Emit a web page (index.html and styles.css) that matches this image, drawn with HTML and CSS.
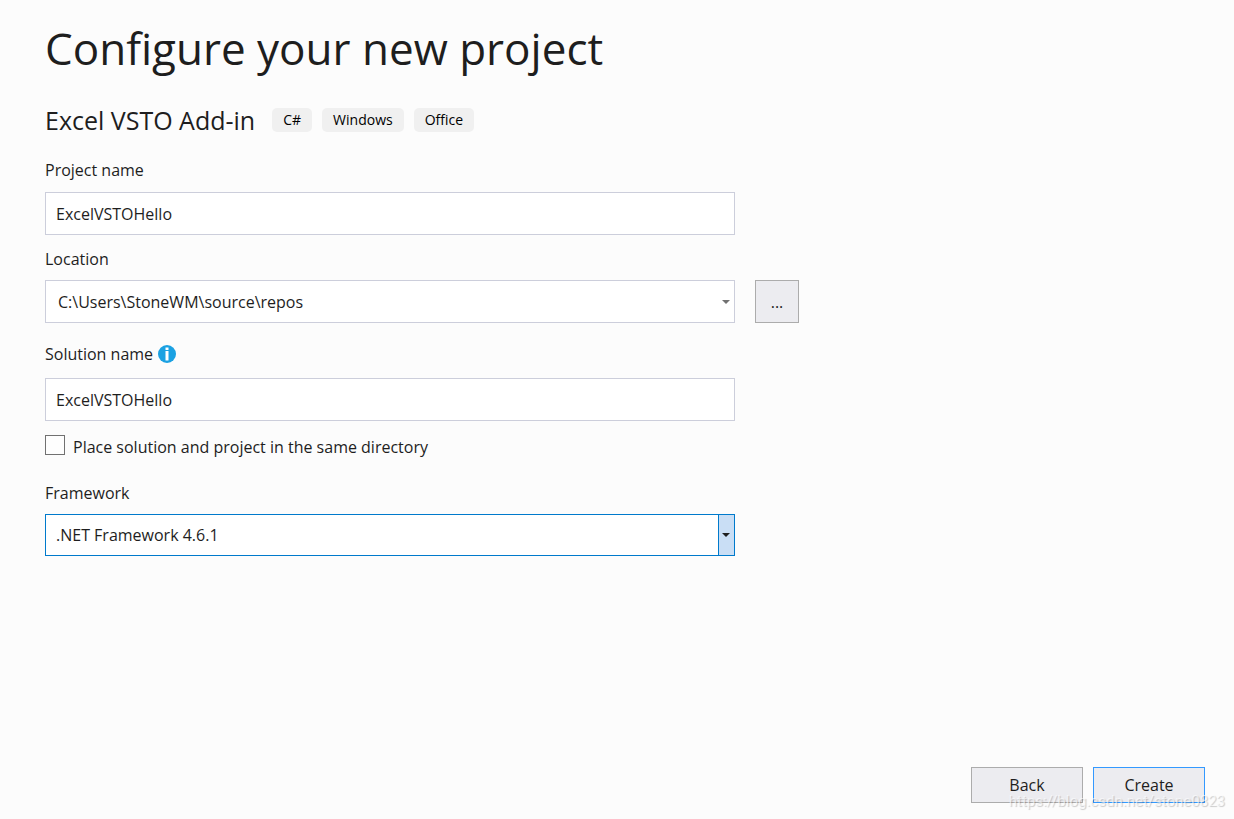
FILE: index.html
```html
<!DOCTYPE html>
<html lang="en">
<head>
  <meta charset="UTF-8">
  <meta name="viewport" content="width=device-width, initial-scale=1.0">
  <title>Configure your new project</title>
  <link rel="stylesheet" href="styles.css">
</head>
<body>
  <header>
    <h1>Configure your new project</h1>
    <div class="template">
      <h2>Excel VSTO Add-in</h2>
      <ul class="tags">
        <li>C#</li>
        <li>Windows</li>
        <li>Office</li>
      </ul>
    </div>
  </header>

  <form class="page-form">
    <main>
      <div class="field">
        <label for="projectName">Project name</label>
        <input class="box" type="text" id="projectName" value="ExcelVSTOHello">
      </div>

      <div class="field location">
        <label for="location">Location</label>
        <div class="combo">
          <select class="box" id="location">
            <option>C:\Users\StoneWM\source\repos</option>
          </select>
          <span class="arrow"><svg width="8" height="4" viewBox="0 0 8 4"><path d="M0 0h8L4 4z" fill="currentColor"/></svg></span>
        </div>
        <button type="button" class="btn browse" aria-label="Browse">...</button>
      </div>

      <div class="field solution">
        <div class="label-row">
          <label for="solutionName">Solution name</label>
          <svg class="info" width="18" height="18" viewBox="0 0 18 18">
            <circle cx="9" cy="9" r="9" fill="#1ba1e2"/>
            <path d="M7.500 2.500h3v2.500h-3zM7.500 6h3v9.500h-3z" fill="#fff"/>
          </svg>
        </div>
        <input class="box" type="text" id="solutionName" value="ExcelVSTOHello">
      </div>

      <div class="check">
        <input type="checkbox" id="sameDir">
        <label for="sameDir">Place solution and project in the same directory</label>
      </div>

      <div class="field framework">
        <label for="framework">Framework</label>
        <div class="combo active">
          <select class="box" id="framework">
            <option>.NET Framework 4.6.1</option>
          </select>
          <span class="arrow"><svg width="8" height="4" viewBox="0 0 8 4"><path d="M0 0h8L4 4z" fill="currentColor"/></svg></span>
        </div>
      </div>
    </main>

    <footer>
      <button type="button" class="btn">Back</button>
      <button type="submit" class="btn primary">Create</button>
    </footer>
  </form>

  <div class="watermark">https://blog.csdn.net/stone0823</div>
</body>
</html>
```

FILE: styles.css
```css
:root {
  --bg: #fcfcfc;
  --text: #1e1e1e;
  --border: #cccedb;
  --blue: #007acc;
  --button: #ececf0;
}

* {
  box-sizing: border-box;
}

body {
  margin: 0;
  min-height: 100vh;
  position: relative;
  display: flex;
  flex-direction: column;
  padding: 16px 29px 16px 45px;
  background: var(--bg);
  color: var(--text);
  font-family: "Open Sans", "Noto Sans", sans-serif;
  font-size: 16px;
  line-height: 24px;
}

h1, h2, ul {
  margin: 0;
  padding: 0;
  font-weight: 400;
}

h1 {
  font-size: 44px;
  line-height: 64px;
}

.template {
  display: flex;
  flex-wrap: wrap;
  align-items: center;
  gap: 17px;
  margin-top: 24px;
}

h2 {
  font-size: 25px;
  line-height: 32px;
}

.tags {
  display: flex;
  gap: 10px;
  list-style: none;
}

.tags li {
  padding: 0 11px;
  border-radius: 5px;
  background: #f0f0f0;
  color: #000;
  font-size: 14px;
}

.page-form {
  flex: 1;
  display: flex;
  flex-direction: column;
}

.field {
  display: grid;
  grid-template-columns: minmax(0, 690px) 44px;
  column-gap: 20px;
  row-gap: 10px;
  margin-top: 22px;
}

.field > label,
.label-row {
  grid-column: 1 / -1;
}

.location {
  margin-top: 12px;
  row-gap: 9px;
}

.solution {
  margin-top: 19px;
  row-gap: 12px;
}

.framework {
  row-gap: 9px;
}

.label-row {
  display: flex;
  align-items: center;
  gap: 5px;
}

.box {
  display: block;
  width: 100%;
  height: 43px;
  padding: 0 10px;
  border: 1px solid var(--border);
  border-radius: 0;
  background: #fff;
  color: var(--text);
  font: inherit;
  appearance: none;
}

.combo {
  position: relative;
}

.combo .box {
  padding: 0 24px 0 12px;
}

.arrow {
  position: absolute;
  top: 0;
  right: 0;
  bottom: 0;
  width: 17px;
  display: flex;
  align-items: center;
  justify-content: center;
  padding-right: 1px;
  color: #717171;
  pointer-events: none;
}

.active .box {
  height: 42px;
  padding-left: 10px;
  border-color: var(--blue);
}

.active .arrow {
  border: 1px solid var(--blue);
  background: #c9def5;
  color: #1e1e1e;
}

.check {
  display: flex;
  gap: 8px;
  margin-top: 14px;
}

.check input {
  width: 20px;
  height: 20px;
  margin: 0;
  border: 1px solid #717171;
  background: #fefefe;
  appearance: none;
}

.check input:checked {
  background: var(--blue);
}

.btn {
  width: 112px;
  height: 36px;
  padding: 0;
  border: 1px solid #acacac;
  background: var(--button);
  color: var(--text);
  font: inherit;
}

.primary {
  border-color: #3399ff;
}

.browse {
  width: 44px;
  height: 43px;
}

footer {
  display: flex;
  justify-content: flex-end;
  gap: 10px;
  margin-top: auto;
  padding-top: 24px;
}

.watermark {
  position: absolute;
  right: 9px;
  bottom: 6px;
  color: rgba(255, 255, 255, 0.6);
  font-family: Roboto, sans-serif;
  font-size: 15px;
  text-shadow: 1px 1px 1px rgba(0, 0, 0, 0.2);
  pointer-events: none;
}
```
